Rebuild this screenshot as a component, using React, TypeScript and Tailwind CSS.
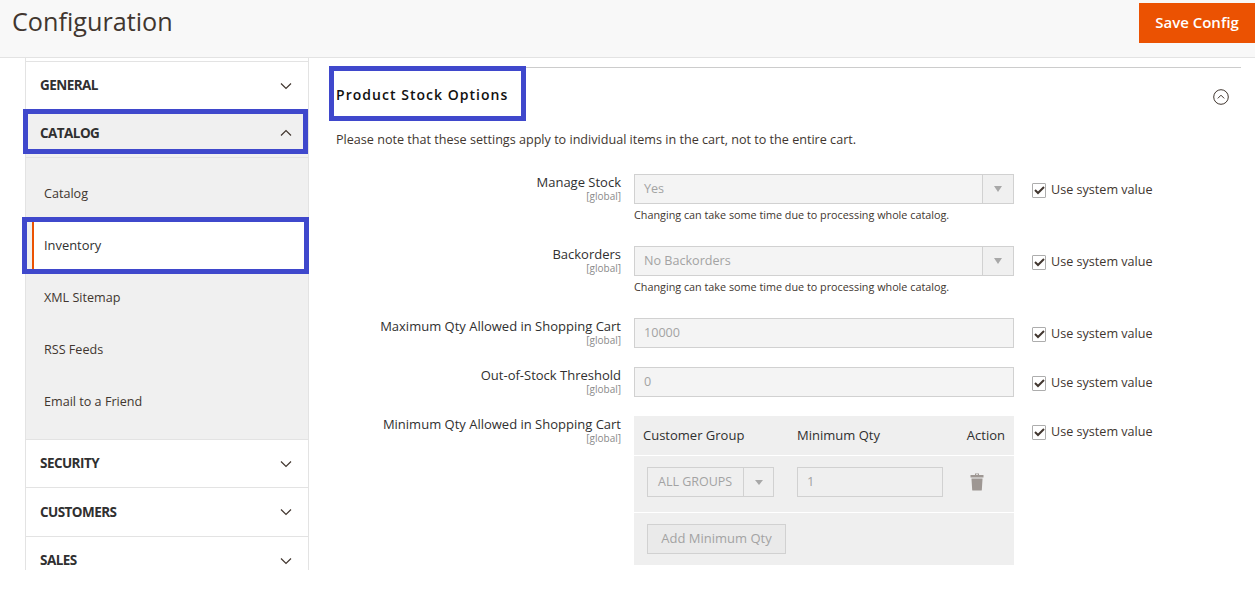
import React from "react";

const font = { fontFamily: '"Open Sans", sans-serif' };

function Chevron({ up = false }: { up?: boolean }) {
  return (
    <svg width="12" height="8" viewBox="0 0 12 8" fill="none" stroke="#41362f" strokeWidth="1.2" className="block">
      <path d={up ? "M1 6.5 L6 1.5 L11 6.5" : "M1 1.5 L6 6.5 L11 1.5"} />
    </svg>
  );
}

function SectionHead({ label, h }: { label: string; h: string }) {
  return (
    <div className={`flex items-center justify-between pl-[14px] pr-[16px] ${h} border-t border-[#e3e3e3]`}>
      <span className="text-[13.5px] font-bold text-[#303030] tracking-[-0.55px]">{label}</span>
      <Chevron />
    </div>
  );
}

function Caret() {
  return (
    <svg width="10" height="6" viewBox="0 0 10 6" className="block"><path d="M1 0 H9 L5 6 Z" fill="#a8a8a8" /></svg>
  );
}

function Check() {
  return (
    <label className="flex items-center gap-[5px] text-[12.6px] text-[#41362f] leading-[16px]">
      <span className="w-[14px] h-[15px] border border-[#adadad] rounded-[1px] bg-white flex items-center justify-center">
        <svg width="11" height="9" viewBox="0 0 11 9" fill="none" stroke="#41362f" strokeWidth="2"><path d="M1 4 L4 7 L10 1" /></svg>
      </span>
      Use system value
    </label>
  );
}

function Label({ text }: { text: string }) {
  return (
    <div className="w-[291px] text-right pt-[1px]">
      <div className="text-[13px] font-medium text-[#303030] leading-[15px]">{text}</div>
      <div className="text-[10px] text-[#8a8a8a] leading-[12px]">[global]</div>
    </div>
  );
}

function Row({ label, children, note, cls = "" }: { label: string; children: React.ReactNode; note?: boolean; cls?: string }) {
  return (
    <div className={`flex ${cls}`}>
      <Label text={label} />
      <div className="w-[380px] ml-[13px]">
        {children}
        {note && <div className="text-[10.8px] text-[#41362f] leading-[14px] mt-[4px]">Changing can take some time due to processing whole catalog.</div>}
      </div>
      <div className="ml-[18px] pt-[8px]"><Check /></div>
    </div>
  );
}

function SelectBox({ value }: { value: string }) {
  return (
    <div className="h-[30px] flex border border-[#d1d1d1] bg-[#f4f4f4] text-[12.6px] text-[#a3a3a3]">
      <div className="flex-1 pl-[9px] leading-[27px]">{value}</div>
      <div className="w-[31px] bg-[#f0f0f0] border-l border-[#d1d1d1] flex items-center justify-center"><Caret /></div>
    </div>
  );
}

function InputBox({ value }: { value: string }) {
  return <div className="h-[30px] border border-[#d1d1d1] bg-[#f4f4f4] pl-[9px] text-[12.6px] text-[#a3a3a3] leading-[27px]">{value}</div>;
}

export default function App() {
  return (
    <div style={font} className="w-[1255px] h-[610px] bg-white overflow-hidden">
      <header className="h-[58px] bg-[#f8f8f8] border-b border-[#e3e3e3] flex justify-between items-start">
        <h1 className="text-[25.2px] text-[#41362f] leading-[42px] pl-[12px]">Configuration</h1>
        <button className="mt-[3px] w-[116px] h-[40px] bg-[#eb5202] text-white text-[15px] font-semibold pb-[1px]">Save Config</button>
      </header>

      <div className="h-[512px] overflow-hidden flex">
        <aside className="ml-[25px] w-[284px] h-full border-x border-[#e3e3e3] pt-[3px] shrink-0">
          <SectionHead label="GENERAL" h="h-[48px]" />
          <div className="relative h-[48px] bg-[#f0f0f0] flex items-center justify-between pl-[14px] pr-[16px]">
            <span className="text-[13.5px] font-bold text-[#303030] tracking-[-0.55px]">CATALOG</span>
            <Chevron up />
            <div className="absolute left-[-3px] right-[0px] top-[0px] h-[45px] border-[5px] border-[#3f48cc]" />
          </div>
          <div className="h-[282px] bg-[#f0f0f0] border-t border-[#e3e3e3] pt-[10px] text-[12.6px] text-[#41362f]">
            <div className="h-[52px] pl-[18px] flex items-center">Catalog</div>
            <div className="relative h-[52px] ml-[6px] pl-[10px] flex items-center bg-white border-l-[2px] border-[#eb5202] text-[12.9px] font-medium text-[#303030]">
              Inventory
              <div className="absolute left-[-12px] right-[-1px] top-[-3px] h-[57px] border-[5px] border-[#3f48cc]" />
            </div>
            <div className="h-[52px] pl-[18px] flex items-center">XML Sitemap</div>
            <div className="h-[52px] pl-[18px] flex items-center">RSS Feeds</div>
            <div className="h-[52px] pl-[18px] flex items-center">Email to a Friend</div>
          </div>
          <SectionHead label="SECURITY" h="h-[48px]" />
          <SectionHead label="CUSTOMERS" h="h-[49px]" />
          <SectionHead label="SALES" h="h-[48px]" />
        </aside>

        <main className="ml-[21px] w-[911px] pt-[9px] shrink-0">
          <div className="border-t border-[#cccccc] h-[55px] flex items-center justify-between relative pl-[6px] pr-[12px]">
            <span className="text-[14px] font-semibold text-[#111111] tracking-[1.03px] pb-[2px]">Product Stock Options</span>
            <svg width="16" height="16" viewBox="0 0 16 16" fill="none" stroke="#41362f" strokeWidth="1" className="mt-[3px]">
              <circle cx="8" cy="8" r="7.3" />
              <path d="M4.8 9.4 L8 6.2 L11.2 9.4" />
            </svg>
            <div className="absolute left-[-1px] top-[-2px] w-[197px] h-[55px] border-[5px] border-[#3f48cc]" />
          </div>
          <p className="pl-[6px] mt-[9px] text-[12.6px] leading-[18px] text-[#41362f]">Please note that these settings apply to individual items in the cart, not to the entire cart.</p>

          <div className="mt-[25px] flex flex-col">
            <Row label="Manage Stock" note>
              <SelectBox value="Yes" />
            </Row>
            <Row label="Backorders" note cls="mt-[24px]">
              <SelectBox value="No Backorders" />
            </Row>
            <Row label="Maximum Qty Allowed in Shopping Cart" cls="mt-[24px]">
              <InputBox value="10000" />
            </Row>
            <Row label="Out-of-Stock Threshold" cls="mt-[19px]">
              <InputBox value="0" />
            </Row>
            <Row label="Minimum Qty Allowed in Shopping Cart" cls="mt-[19px]">
              <div className="h-[149px] bg-[#efefef] text-[13px] text-[#303030]">
                <div className="h-[40px] flex items-center border-b border-white">
                  <span className="ml-[9px] w-[154px]">Customer Group</span>
                  <span className="flex-1">Minimum Qty</span>
                  <span className="mr-[9px]">Action</span>
                </div>
                <div className="h-[57px] flex items-start pt-[11px] border-b border-white">
                  <div className="ml-[13px] w-[127px] h-[30px] flex border border-[#d1d1d1] text-[#a3a3a3] text-[12.5px]">
                    <div className="flex-1 pl-[10px] leading-[27px]">ALL GROUPS</div>
                    <div className="w-[30px] border-l border-[#d1d1d1] flex items-center justify-center">
                      <svg width="8" height="5" viewBox="0 0 8 5"><path d="M0 0 H8 L4 5 Z" fill="#a8a8a8" /></svg>
                    </div>
                  </div>
                  <div className="ml-[23px] w-[146px] h-[30px] border border-[#d1d1d1] pl-[9px] text-[#a3a3a3] leading-[27px]">1</div>
                  <svg width="14" height="18" viewBox="0 0 14 18" className="ml-[27px] mt-[6px]" fill="#9e9793">
                    <path d="M5 0.5 H9 V2 H13.5 V4.5 H0.5 V2 H5 Z M6 1.3 V2 H8 V1.3 Z" />
                    <path d="M1.5 5.5 H12.5 L11.8 17 Q11.7 17.5 11.2 17.5 H2.8 Q2.3 17.5 2.2 17 Z" />
                  </svg>
                </div>
                <div className="pt-[11px] pl-[13px]">
                  <div className="w-[139px] h-[30px] border border-[#d1d1d1] bg-[#eaeaea] text-center text-[13px] font-medium text-[#a3a3a3] leading-[27px]">Add Minimum Qty</div>
                </div>
              </div>
            </Row>
          </div>
        </main>
      </div>
    </div>
  );
}
